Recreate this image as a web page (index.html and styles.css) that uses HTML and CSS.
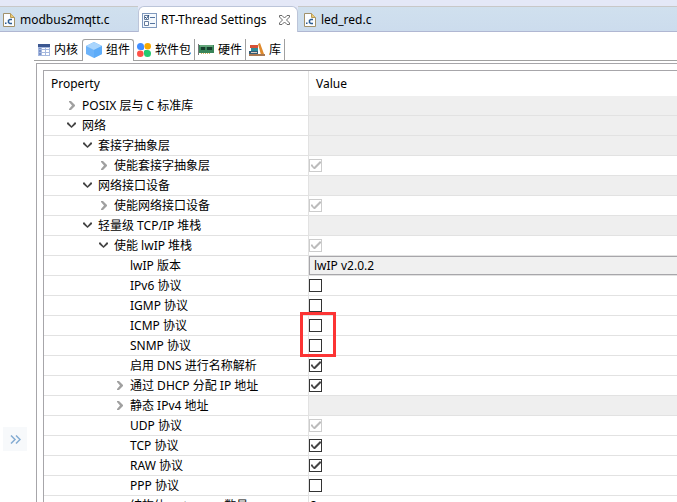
FILE: index.html
```
<!DOCTYPE html>
<html lang="zh-CN">
<head>
<meta charset="utf-8">
<title>RT-Thread Settings</title>
<link rel="stylesheet" href="styles.css">
</head>
<body>
<nav class="editor-tabs" aria-label="Editors">
  <button class="editor-tab first"><svg class="file-icon" width="12" height="14" viewBox="0 0 12 14"><path d="M.5.5h7l4 4v9H.5z" fill="#fbfdff" stroke="#a1916a"/><path d="M7.500 .5v4h4" fill="#ebc974" stroke="#b79b55"/><path d="M2 9.500h1.500V11H2z" fill="#2b5d94"/><path d="M9 6.500H7L5.500 7.500v2L7 10.500h2" fill="none" stroke="#2b5d94" stroke-width="1.500"/></svg>modbus2mqtt.c</button>
  <button class="editor-tab active"><svg width="15" height="15" viewBox="0 0 15 15"><rect x=".5" y=".5" width="14" height="14" fill="#f5f9fd" stroke="#8099bd"/><path d="M2.500 2.500h4v4h-4zM2.500 8.500h4v4h-4z" fill="#fff" stroke="#667c9c"/><path d="M3 4l1.500 1.500L7 2" fill="none" stroke="#234a7c"/><path d="M8 4.500h5M8 10.500h5" stroke="#55749f"/></svg>RT-Thread Settings<svg class="close" width="11" height="10" viewBox="0 0 11 10"><path d="M.5.5h2.500l2.500 2.500L8 .5h2.500v1.500L7.500 5l3 3v1.500H8L5.500 7 3 9.500H.5V8l3-3-3-3z" fill="#fff" stroke="#6b6b6b"/></svg></button>
  <button class="editor-tab last"><svg class="file-icon" width="12" height="14" viewBox="0 0 12 14"><path d="M.5.5h7l4 4v9H.5z" fill="#fbfdff" stroke="#a1916a"/><path d="M7.500 .5v4h4" fill="#ebc974" stroke="#b79b55"/><path d="M2 9.500h1.500V11H2z" fill="#2b5d94"/><path d="M9 6.500H7L5.500 7.500v2L7 10.500h2" fill="none" stroke="#2b5d94" stroke-width="1.500"/></svg>led_red.c</button>
</nav>
<div class="workspace">
  <aside class="gutter"><button class="expand" aria-label="展开"><svg width="11" height="9" viewBox="0 0 11 9"><path d="M1 .5l4 4-4 4M6 .5l4 4-4 4" fill="none" stroke="#84acd2" stroke-width="1.500"/></svg></button></aside>
  <main class="editor">
    <nav class="category-tabs" aria-label="Categories">
      <button class="category"><svg width="12" height="12" viewBox="0 0 12 12"><path d="M0 0h12v12H0z" fill="#a5b8df"/><path d="M0 0h12v3H0z" fill="#3b5790"/><path d="M1 4h2v1H1zM1 6h2v2H1zM1 9h2v2H1z" fill="#7890c7"/><path d="M4 4h3v1H4zM8 4h3v1H8zM4 6h3v2H4zM8 6h3v2H8zM4 9h3v2H4zM8 9h3v2H8z" fill="#fff"/></svg>内核</button>
      <button class="category selected"><svg width="16" height="16" viewBox="0 0 16 16"><path d="M8 0l8 4v8l-8 4-8-4V4z" fill="#6cb3fa"/><path d="M8 0l8 4-8 4-8-4z" fill="#a9d5fd"/><path d="M8 8l8-4v8l-8 4z" fill="#5dacf9"/></svg>组件</button>
      <button class="category"><svg width="14" height="14" viewBox="0 0 14 14"><path d="M3.500 0A3.500 3.500 0 0 1 7 3.500V6L6 7H3.500a3.500 3.500 0 0 1 0-7" fill="#418dff"/><circle cx="10.700" cy="3.300" r="3.300" fill="#f7a900"/><circle cx="3.300" cy="10.700" r="3.300" fill="#ff5147"/><path d="M8 7h2.500A3.500 3.500 0 1 1 7 10.500V8z" fill="#25ca70"/></svg>软件包</button>
      <button class="category"><svg width="16" height="11" viewBox="0 0 16 11"><path d="M0 0v11" stroke="#777" stroke-width="2"/><path d="M1 1h15v8H1z" fill="#39855a"/><path d="M3 3h4v3H3zM9 3h5v3H9z" fill="#173e2d"/><path d="M2 2h13" stroke="#8fc69b"/><path d="M3 9.500h9" stroke="#cfb05a" stroke-dasharray="1 1"/></svg>硬件</button>
      <button class="category"><svg width="16" height="13" viewBox="0 0 16 13"><path d="M1 2h8v3H1z" fill="#d65136"/><path d="M2 5h7v3H2z" fill="#308c98"/><path d="M0 8h9v3H0z" fill="#335c75"/><path d="M9 1l2-1 4 11-3 1z" fill="#e08a2c"/><path d="M2 9.500h6" stroke="#d8ccc0"/><path d="M0 12h16" stroke="#a97851" stroke-width="2"/></svg>库</button>
    </nav>
    <section class="outer-frame"><div class="inner-frame">
      <table class="properties">
        <thead><tr><th>Property</th><th>Value</th></tr></thead>
        <tbody>
        <tr><td class="level-1"><span class="arrow closed"></span>POSIX 层与 C 标准库</td><td class="empty"></td></tr>
        <tr><td class="level-1"><span class="arrow open"></span>网络</td><td class="empty"></td></tr>
        <tr><td class="level-2"><span class="arrow open"></span>套接字抽象层</td><td class="empty"></td></tr>
        <tr><td class="level-3"><span class="arrow closed"></span><label for="sal">使能套接字抽象层</label></td><td><input id="sal" type="checkbox" checked disabled></td></tr>
        <tr><td class="level-2"><span class="arrow open"></span>网络接口设备</td><td class="empty"></td></tr>
        <tr><td class="level-3"><span class="arrow closed"></span><label for="netdev">使能网络接口设备</label></td><td><input id="netdev" type="checkbox" checked disabled></td></tr>
        <tr><td class="level-2"><span class="arrow open"></span>轻量级 TCP/IP 堆栈</td><td class="empty"></td></tr>
        <tr><td class="level-3"><span class="arrow open"></span><label for="lwip">使能 lwIP 堆栈</label></td><td><input id="lwip" type="checkbox" checked disabled></td></tr>
        <tr><td class="level-4"><label for="version">lwIP 版本</label></td><td><select id="version"><option>lwIP v2.0.2</option></select></td></tr>
        <tr><td class="level-4"><label for="ipv6">IPv6 协议</label></td><td><input id="ipv6" type="checkbox"></td></tr>
        <tr><td class="level-4"><label for="igmp">IGMP 协议</label></td><td><input id="igmp" type="checkbox"></td></tr>
        <tr><td class="level-4"><label for="icmp">ICMP 协议</label></td><td class="marked"><input id="icmp" type="checkbox"><span class="highlight"></span></td></tr>
        <tr><td class="level-4"><label for="snmp">SNMP 协议</label></td><td><input id="snmp" type="checkbox"></td></tr>
        <tr><td class="level-4"><label for="dns">启用 DNS 进行名称解析</label></td><td><input id="dns" type="checkbox" checked></td></tr>
        <tr><td class="level-4"><span class="arrow closed"></span><label for="dhcp">通过 DHCP 分配 IP 地址</label></td><td><input id="dhcp" type="checkbox" checked></td></tr>
        <tr><td class="level-4"><span class="arrow closed"></span>静态 IPv4 地址</td><td class="empty"></td></tr>
        <tr><td class="level-4"><label for="udp">UDP 协议</label></td><td><input id="udp" type="checkbox" checked disabled></td></tr>
        <tr><td class="level-4"><label for="tcp">TCP 协议</label></td><td><input id="tcp" type="checkbox" checked></td></tr>
        <tr><td class="level-4"><label for="raw">RAW 协议</label></td><td><input id="raw" type="checkbox" checked></td></tr>
        <tr><td class="level-4"><label for="ppp">PPP 协议</label></td><td><input id="ppp" type="checkbox"></td></tr>
        <tr><td class="level-4">结构体 netconns 数量</td><td class="number">8</td></tr>
        </tbody>
      </table>
    </div></section>
  </main>
</div>
</body>
</html>
```
FILE: styles.css
```
* { box-sizing: border-box; }
body {
  margin: 0;
  height: 100vh;
  overflow: hidden;
  display: flex;
  flex-direction: column;
  background: #fff;
  color: #000;
  font: 12px/20px "Noto Sans", "Noto Sans CJK SC", sans-serif;
}
button, select { font: inherit; color: inherit; }
button { background: none; border: 0; padding: 0; white-space: nowrap; }
svg { flex: none; }
.editor-tabs {
  flex: none;
  display: flex;
  height: 32px;
  padding-top: 6px;
  background: #e4e8f7;
}
.editor-tab {
  display: flex;
  align-items: center;
  gap: 5px;
  padding: 1px 3px 0;
  border-top: 1px solid #c8c8c8;
  border-bottom: 1px solid #b0b7d2;
  background: linear-gradient(#d0e0ee, #ccdced);
}
.editor-tab.first { width: 138px; }
.editor-tab.active {
  width: 160px;
  gap: 4px;
  border: 1px solid #bcc5d9;
  border-bottom: 0;
  border-radius: 6px 6px 0 0;
  background: #fff;
}
.editor-tab.last { flex: 1; padding-left: 6px; }
.close { margin-left: 8px; }
.workspace { flex: 1; display: flex; min-height: 0; }
.gutter { flex: none; width: 34px; padding: 395px 0 0 3px; }
.expand {
  display: grid;
  place-items: center;
  width: 24px;
  height: 24px;
  background: #f7f9fb;
}
.editor { flex: 1; min-width: 0; display: flex; flex-direction: column; padding-top: 7px; }
.category-tabs { flex: none; display: flex; height: 22px; border-bottom: 1px solid #a0a0a0; }
.category {
  display: flex;
  align-items: center;
  gap: 4px;
  padding: 0 3px;
  border-right: 1px solid #a0a0a0;
}
.category.selected {
  height: 22px;
  padding-bottom: 2px;
  border: 1px solid #a0a0a0;
  border-bottom: 0;
  border-radius: 3px 3px 0 0;
  background: #fff;
}
.category:first-child { padding: 0 4px; border-right: 0; }
.outer-frame {
  flex: 1;
  min-height: 0;
  margin: 2px 0 0 2px;
  padding: 6px 0 0 6px;
  border: solid #a7a6aa;
  border-width: 1px 0 0 1px;
}
.inner-frame {
  height: 100%;
  overflow: hidden;
  border: solid #a7a6aa;
  border-width: 1px 0 0 1px;
}
.properties { width: 100%; table-layout: fixed; border-collapse: separate; border-spacing: 0; }
th { height: 25px; padding: 0 7px; text-align: left; font-weight: 400; }
th:first-child { width: 264px; }
th:last-child, td:last-child { border-left: 1px solid #e2e2e2; }
td { height: 20px; padding: 0; border-bottom: 1px solid #e2e2e2; line-height: 19px; white-space: nowrap; }
td.empty { background: #efefef; }
td.number { padding-left: 1px; }
.level-1 { padding-left: 38px; }
.level-2 { padding-left: 54px; }
.level-3 { padding-left: 70px; }
.level-4 { padding-left: 86px; }
.arrow {
  display: inline-block;
  width: 9px;
  height: 9px;
  margin: 0 6px 0 -15px;
  background: #444;
}
.arrow.open { clip-path: polygon(0 2px, 1px 1px, 50% 5px, 8px 1px, 9px 2px, 9px 3px, 50% 7px, 0 3px); }
.arrow.closed { background: #a0a0a0; clip-path: polygon(2px 0, 4px 0, 8px 4px, 8px 5px, 4px 9px, 2px 9px, 2px 8px, 5px 50%, 2px 1px); }
input[type="checkbox"] {
  appearance: none;
  display: block;
  width: 13px;
  height: 13px;
  margin: 0;
  border: 1px solid #333;
  background: #fff;
}
input:checked::before {
  content: "";
  display: block;
  width: 11px;
  height: 11px;
  background: #444;
  clip-path: polygon(1px 5px, 2px 4px, 4px 7px, 10px 1px, 11px 2px, 11px 3px, 5px 9px, 4px 9px, 1px 6px);
}
input[type="checkbox"]:disabled { border-color: #ccc; }
input:disabled::before { background: #bbb; }
select {
  appearance: none;
  display: block;
  width: 100%;
  height: 19px;
  padding: 0 4px;
  border: 1px solid #a7a6aa;
  border-right: 0;
  border-radius: 0;
  background: #f0f0f0;
  line-height: 17px;
}
.marked { position: relative; }
.highlight {
  position: absolute;
  top: -4px;
  left: -9px;
  width: 36px;
  height: 45px;
  border: 3px solid #fc3434;
  pointer-events: none;
}
```
